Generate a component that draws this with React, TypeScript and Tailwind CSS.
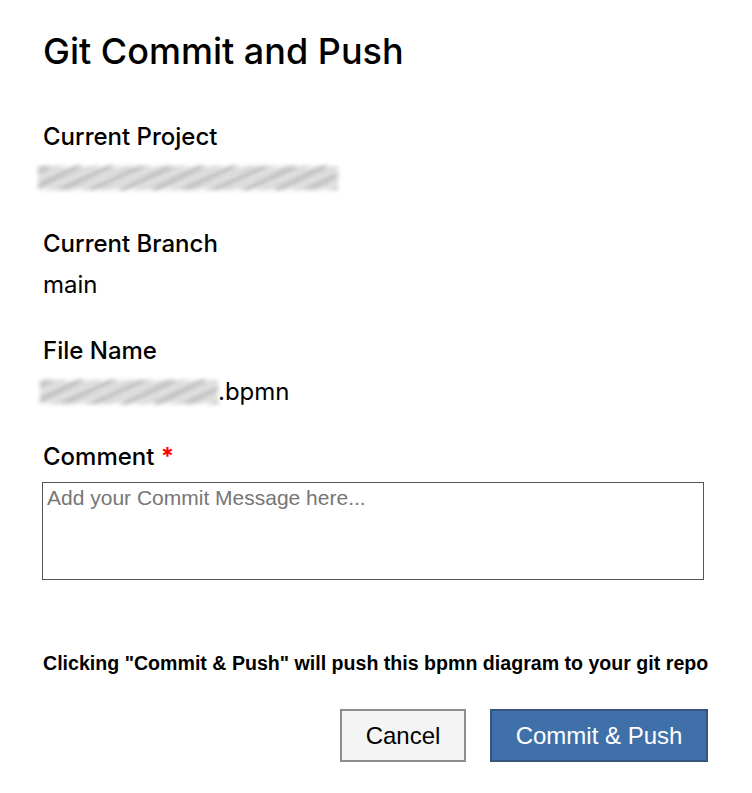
import { useState } from "react";

function Redacted({ className }: { className: string }) {
  return (
    <div className={`relative ${className}`}>
      <div className="absolute inset-0 blur-[2px] bg-[repeating-linear-gradient(155deg,transparent_0px,transparent_3px,rgba(80,80,80,0.45)_5px,transparent_7px,transparent_13px),repeating-linear-gradient(160deg,#f3f3f3_0px,#c0c0c0_2px,#e6e6e6_4px,#f5f5f5_6px)]" />
    </div>
  );
}

function Field({ label, children }: { label: React.ReactNode; children: React.ReactNode }) {
  return (
    <div className="flex flex-col">
      <div className="text-[24px] leading-[30px] font-medium text-black font-['Inter',sans-serif]">
        {label}
      </div>
      <div className="mt-[11px] h-[30px] flex items-center text-[24px] leading-[30px] text-black font-['Inter',sans-serif]">
        {children}
      </div>
    </div>
  );
}

export default function App() {
  const [comment, setComment] = useState("");

  return (
    <div className="min-h-screen bg-white">
      <div className="pl-[43px] pr-[44px] pt-[30px] flex flex-col">
        <h1 className="text-[36px] leading-[43px] font-medium text-black font-['Inter',sans-serif]">
          Git Commit and Push
        </h1>

        <div className="mt-[49px] flex flex-col gap-[36px]">
          <Field label="Current Project">
            <Redacted className="-ml-[5px] w-[300px] h-[24px]" />
          </Field>
          <Field label="Current Branch">main</Field>
          <Field label="File Name">
            <Redacted className="-ml-[3px] w-[178px] h-[24px]" />
            <span>.bpmn</span>
          </Field>
        </div>

        <div className="mt-[35px] flex flex-col">
          <label className="text-[24px] leading-[30px] font-medium text-black font-['Inter',sans-serif]">
            Comment <span className="text-[#ff0000] font-bold">*</span>
          </label>
          <textarea
            value={comment}
            onChange={(e) => setComment(e.target.value)}
            placeholder="Add your Commit Message here..."
            className="mt-[10px] -ml-[1px] w-[662px] h-[98px] resize-none border border-[#555] px-[4px] py-[3px] text-[21px] leading-[24px] text-black placeholder:text-[#767676] font-['Liberation_Sans',Arial,sans-serif] outline-none"
          />
        </div>

        <p className="mt-[71px] text-[19.6px] leading-[24px] font-bold text-black font-['Liberation_Sans',Arial,sans-serif] whitespace-nowrap">
          Clicking "Commit &amp; Push" will push this bpmn diagram to your git repo
        </p>

        <div className="mt-[34px] flex justify-end gap-[24px]">
          <button className="w-[126px] h-[53px] bg-[#f4f4f4] border-2 border-[#8d8d8d] text-[24px] text-black font-['Liberation_Sans',Arial,sans-serif]">
            Cancel
          </button>
          <button className="w-[218px] h-[53px] bg-[#3f70aa] border-2 border-[#35557c] text-[24px] text-white font-['Liberation_Sans',Arial,sans-serif]">
            Commit &amp; Push
          </button>
        </div>
      </div>
    </div>
  );
}
